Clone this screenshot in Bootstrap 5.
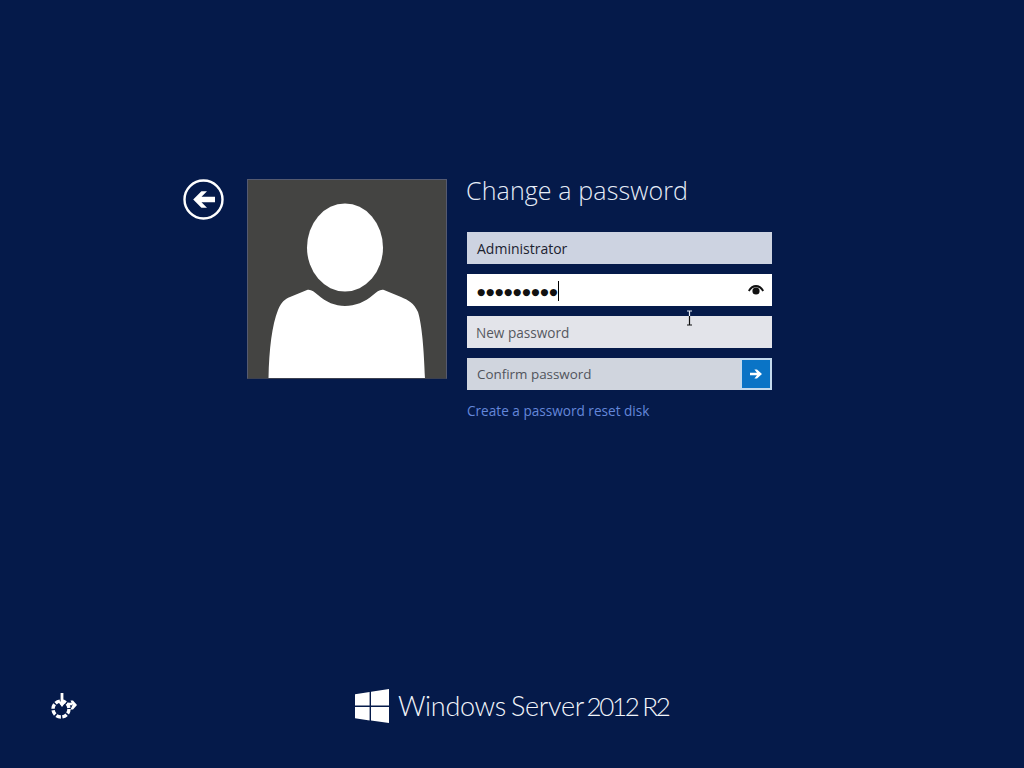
<!DOCTYPE html>
<html lang="en">
<head>
<meta charset="utf-8">
<title>Change a password</title>
<link href="https://cdn.jsdelivr.net/npm/bootstrap@5.3.0/dist/css/bootstrap.min.css" rel="stylesheet">
<style>
html,body{height:100%;}
body{background:#051a4a;font-family:"Open Sans","Liberation Sans",sans-serif;overflow:hidden;}
.screen{height:768px;}
.main-area{padding:179px 0 0 183px;}
.back-btn{width:41px;height:41px;margin-right:23px;background:none;border:0;padding:0;flex:none;line-height:0;}
.user-tile{width:200px;height:200px;background:#444442;border:1px solid #555a70;border-bottom-color:#3c4150;flex:none;line-height:0;}
.pw-form{width:305px;margin-left:20px;}
.pw-title{font-size:25px;font-weight:300;color:#e6edf8;line-height:24px;height:53px;margin:0;margin-top:-1px;margin-left:-1px;letter-spacing:.12px;}
.pw-stack{gap:10px;margin-top:1px;}
.pw-field{height:32px;position:relative;font-size:14px;line-height:34px;padding:0 10px;}
.pw-user{background:#cdd3e1;color:#1c2230;}
.pw-current{background:#fff;line-height:32px;}
.pw-new{background:#e3e4ea;color:#55585f;padding-left:9px;font-size:13.6px;}
.pw-confirm{background:#d0d5de;color:#50545c;font-size:13.4px;line-height:33px;}
.dots{color:#111;font-size:9.4px;letter-spacing:.85px;font-family:"DejaVu Sans",sans-serif;}
.caret-bar{display:inline-block;width:1px;height:20px;background:#000;vertical-align:middle;}
.eye-icon{position:absolute;right:7px;top:10px;line-height:0;}
.go-btn{position:absolute;right:2px;top:2px;bottom:2px;width:28px;background:#0a74c6;border:0;padding:0;line-height:0;box-shadow:0 0 0 2px #c3d9ec;}
.reset-link{color:#6487da;font-size:13.6px;text-decoration:none;line-height:20px;display:block;margin-top:11px;}
.ibeam{position:absolute;left:685px;top:310px;line-height:0;}
.footer-area{padding-bottom:45px;position:relative;height:35px;box-sizing:content-box;}
.power-icon{position:absolute;left:50px;top:4px;line-height:0;}
.brand{margin-left:355px;line-height:0;}
.brand-text{color:#f2f5fa;font-family:Lato,"Open Sans",sans-serif;font-size:27px;font-weight:300;line-height:34px;margin-left:9px;letter-spacing:-.3px;white-space:nowrap;word-spacing:-2px;}
.brand-ver{font-size:26px;letter-spacing:-2.3px;word-spacing:0;margin-left:-2px;}
</style>
</head>
<body>
<div class="screen d-flex flex-column position-relative">
  <div class="main-area d-flex align-items-start flex-grow-1">
    <button class="back-btn" type="button" aria-label="Back">
      <svg width="41" height="41" viewBox="0 0 41 41"><circle cx="20.5" cy="20.5" r="19" fill="none" stroke="#fff" stroke-width="2.4"/><path d="M32 17.8H18.5l5.5-5.6h-5.6l-8.2 8.300 8.200 8.300H24l-5.500-5.600H32z" fill="#fff"/></svg>
    </button>
    <div class="user-tile overflow-hidden">
      <svg width="198" height="198" viewBox="0 0 198 198"><ellipse cx="97" cy="67.500" rx="38" ry="44" fill="#fff"/><path d="M20.500 199C21 170 24 145 30 130C33 122 37 119 42 117L59 110C63 109 66 112 70 115C78 122 87 126 97 126C107 126 117 122 125 115C129 112 132 109 136 110L153 117C160 120 166 123 170 132C174 145 176 170 177 199z" fill="#fff"/></svg>
    </div>
    <form class="pw-form d-flex flex-column">
      <h1 class="pw-title">Change a password</h1>
      <div class="pw-stack d-flex flex-column">
        <div class="pw-field pw-user">Administrator</div>
        <div class="pw-field pw-current"><span class="dots">●●●●●●●●●</span><span class="caret-bar"></span>
          <span class="eye-icon"><svg width="18" height="12" viewBox="0 0 18 12"><path d="M1 6.500C3 2.800 6 1 9 1s6 1.800 8 5.500l-1.600.9C13.800 4.700 11.500 3.200 9 3.200S4.200 4.700 2.600 7.400z" fill="#111"/><circle cx="9" cy="7" r="3.600" fill="#111"/></svg></span>
        </div>
        <div class="pw-field pw-new">New password</div>
        <div class="pw-field pw-confirm">Confirm password
          <button class="go-btn" type="button" aria-label="Submit"><svg width="14" height="12" viewBox="0 0 14 12"><path d="M1 4.800h7L5.400 1.500H8L13 6l-5 4.500H5.400L8 7.200H1z" fill="#fff"/></svg></button>
        </div>
      </div>
      <a class="reset-link" href="#">Create a password reset disk</a>
    </form>
  </div>
  <div class="ibeam"><svg width="9" height="16" viewBox="0 0 9 16"><path d="M2 1h5M4.500 1v6" fill="none" stroke="#e8eef8" stroke-width="1.200"/><path d="M4.500 6v9M2 15h5" fill="none" stroke="#111" stroke-width="1.200"/></svg></div>
  <div class="footer-area d-flex align-items-center">
    <span class="power-icon">
      <svg width="28" height="27" viewBox="0 0 28 27"><circle cx="11" cy="17" r="8" fill="none" stroke="#fff" stroke-width="3.400" stroke-dasharray="4.800 1.500"/><path d="M12 1v12" stroke="#fff" stroke-width="2.800" fill="none"/><path d="M8 9.500h8L12 15z" fill="#fff"/><path d="M17 12h5" stroke="#fff" stroke-width="2.600"/><path d="M20.500 8.500h2.500l4 4.500-4 4.500h-2.500l2-4.500z" fill="#fff"/></svg>
    </span>
    <div class="brand d-flex align-items-center">
      <svg width="34" height="34" viewBox="0 0 34 34"><path d="M0 5.200 14.600 3v13.500H0zM16 2.800 34 0v16.500H16zM0 18h14.600v13.400L0 29.200zM16 18h18v16l-18-2.500z" fill="#fff"/></svg>
      <span class="brand-text">Windows Server <span class="brand-ver">2012 R2</span></span>
    </div>
  </div>
</div>
<script src="https://cdn.jsdelivr.net/npm/bootstrap@5.3.0/dist/js/bootstrap.bundle.min.js"></script>
</body>
</html>
